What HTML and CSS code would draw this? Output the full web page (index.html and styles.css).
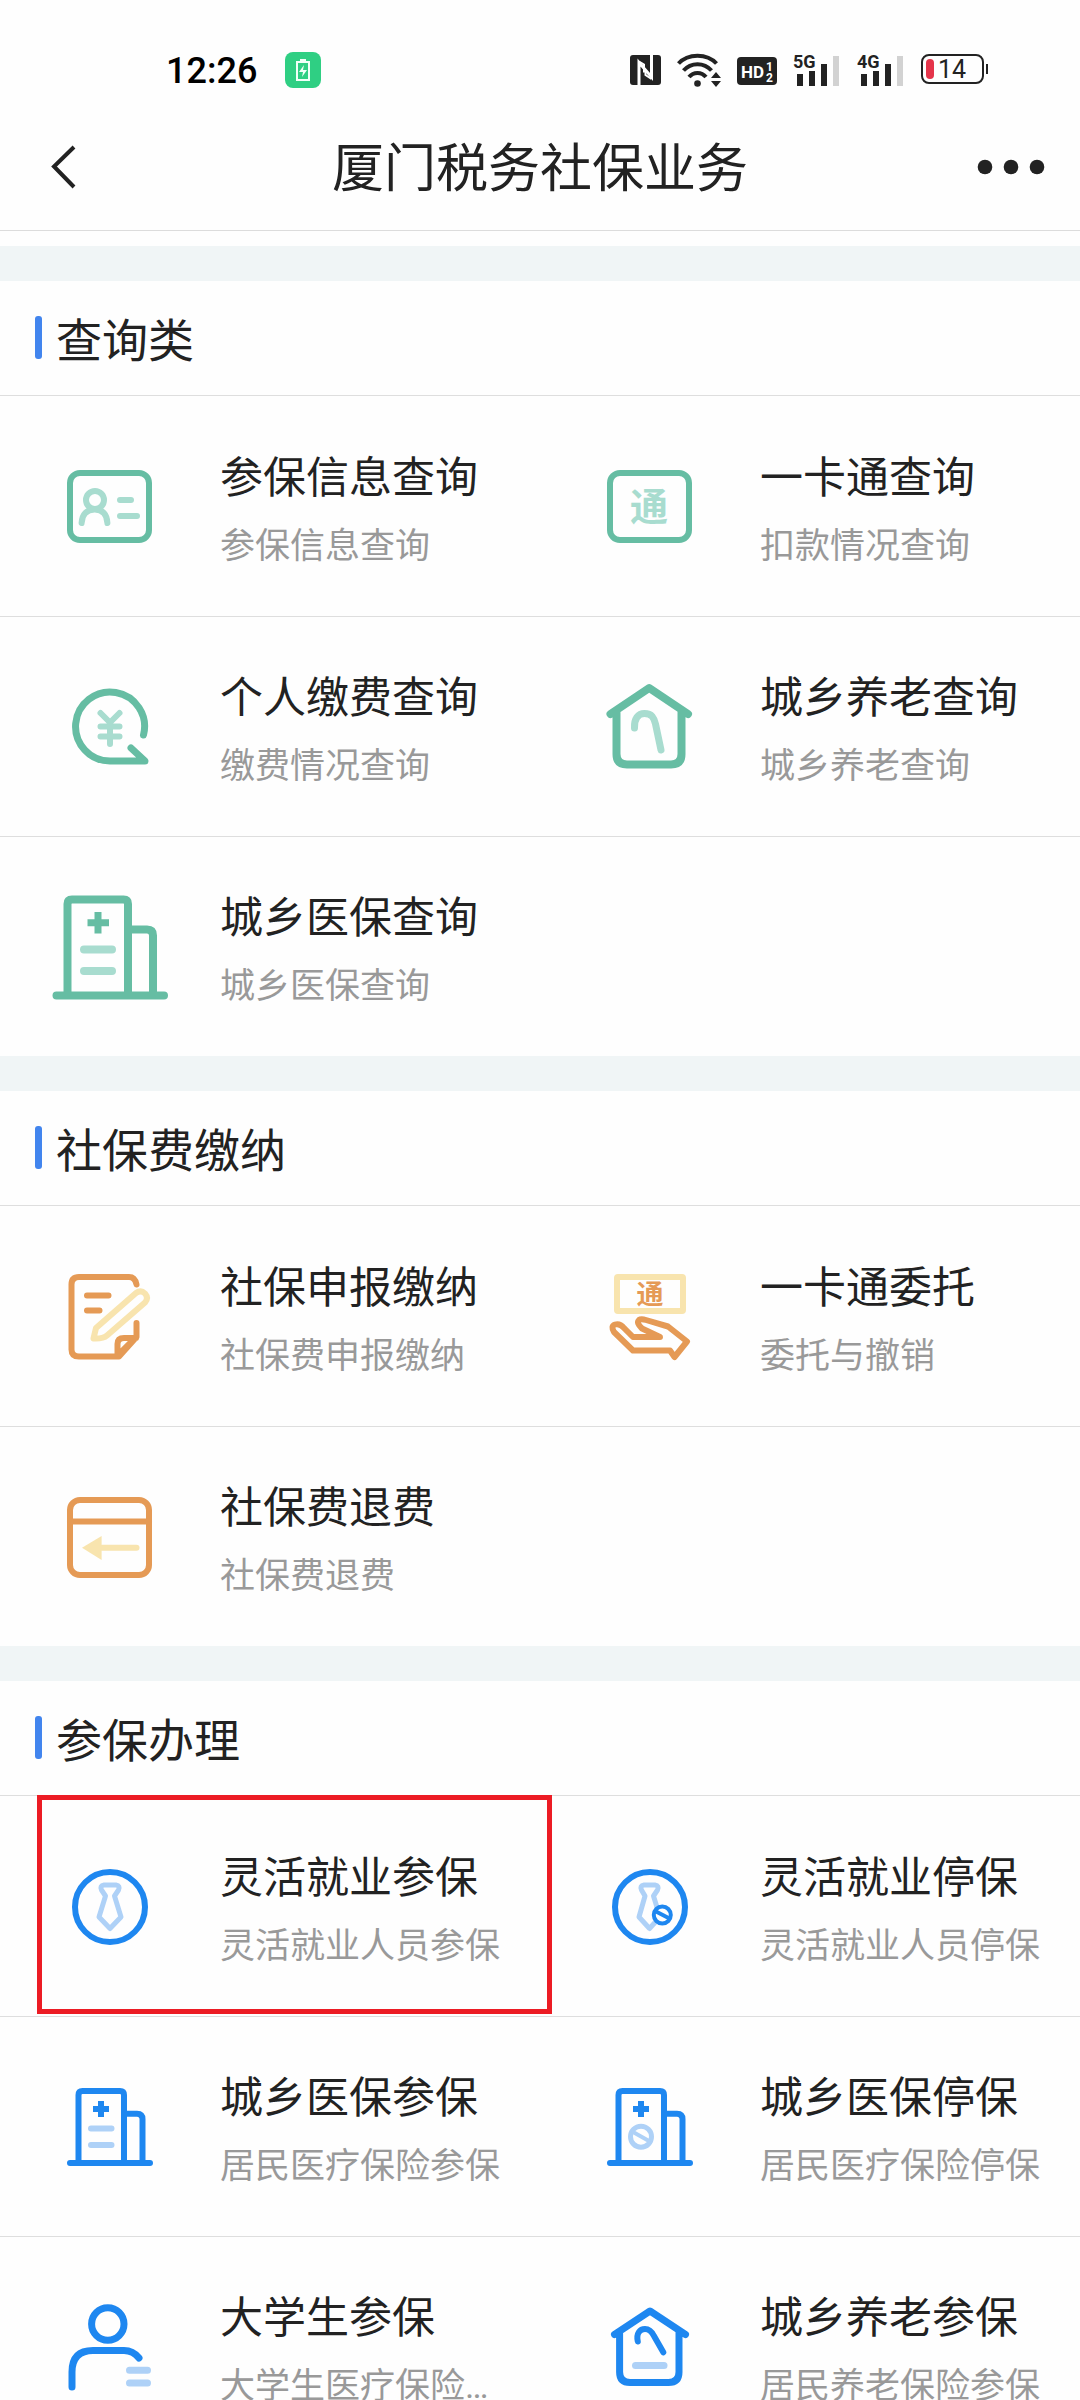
FILE: index.html
```html
<!DOCTYPE html>
<html lang="zh-CN">
<head>
<meta charset="utf-8">
<meta name="viewport" content="width=device-width, initial-scale=1">
<title>厦门税务社保业务</title>
<link rel="stylesheet" href="styles.css">
</head>
<body>
<div class="app">
  <div class="status">
    <div class="status-left">
      <span class="clock">12:26</span>
      <svg class="charge" width="36" height="36" viewBox="0 0 36 36" aria-hidden="true">
        <rect width="36" height="36" rx="8" fill="#2fcf83"/>
        <rect x="12" y="10" width="12" height="18" fill="none" stroke="#f1fff8" stroke-width="2"/>
        <path d="M15 7h6v3h-6z" fill="#f1fff8"/>
        <path d="M19 13l-5 7h4l-1 5 5-7h-4z" fill="#f1fff8"/>
      </svg>
    </div>
    <div class="status-right">
      <svg width="31" height="32" viewBox="0 0 31 32" aria-hidden="true">
        <rect y="1" width="31" height="30" rx="3" fill="#222"/>
        <path d="M9 31V8.500l12.500 14.500V1" fill="none" stroke="#fff" stroke-width="3"/>
        <path d="M9 7.500l5 3v8" fill="none" stroke="#fff" stroke-width="2"/>
        <path d="M21.500 25l-6-4v-4" fill="none" stroke="#fff" stroke-width="2"/>
      </svg>
      <svg width="44" height="34" viewBox="0 0 44 34" aria-hidden="true">
        <g fill="none" stroke="#222" stroke-width="4">
          <path d="M1.500 10.500C11 0 30 0 39.500 10.500"/>
          <path d="M6.500 17.500C14 9 27 9 34.500 17.500"/>
          <path d="M12 24C16.500 18.500 24.500 18.500 29 24"/>
        </g>
        <circle cx="20.500" cy="30.500" r="3.300" fill="#222"/>
        <path d="M39 19l5 6H34zM39 34l5-6H34z" fill="#222"/>
      </svg>
      <svg width="40" height="32" viewBox="0 0 40 32" aria-hidden="true">
        <rect y="3" width="40" height="28" rx="4" fill="#222"/>
        <text x="4" y="24" class="t-hd">HD</text>
        <text x="29" y="17" class="t-num">1</text>
        <text x="29" y="28" class="t-num">2</text>
      </svg>
      <svg width="48" height="42" viewBox="0 -4 48 42" aria-hidden="true">
        <text x="0" y="15" class="t-net">5G</text>
        <path d="M7 21v12M19 18v15M31 11v22" stroke="#222" stroke-width="6"/>
        <path d="M43 3v30" stroke="#d2d2d2" stroke-width="6"/>
      </svg>
      <svg width="48" height="42" viewBox="0 -4 48 42" aria-hidden="true">
        <text x="0" y="15" class="t-net">4G</text>
        <path d="M7 21v12M19 18v15M31 11v22" stroke="#222" stroke-width="6"/>
        <path d="M43 3v30" stroke="#d2d2d2" stroke-width="6"/>
      </svg>
      <svg width="67" height="32" viewBox="0 0 67 32" aria-hidden="true">
        <rect x="1" y="1" width="61" height="28" rx="7" fill="none" stroke="#222" stroke-width="2"/>
        <rect x="5" y="5" width="8" height="20" rx="4" fill="#e5344a"/>
        <path d="M66 10v10" stroke="#222" stroke-width="2"/>
        <text x="17" y="24" class="t-bat">14</text>
      </svg>
    </div>
  </div>

  <header class="nav">
    <button class="nav-btn" type="button" aria-label="返回">
      <svg width="28" height="46" viewBox="0 0 28 46"><path d="M25 2L5 21.500l20 20.500" fill="none" stroke="#222" stroke-width="4"/></svg>
    </button>
    <h1 class="nav-title">厦门税务社保业务</h1>
    <button class="nav-btn nav-more" type="button" aria-label="更多">
      <svg width="68" height="18" viewBox="0 0 68 18" fill="#222"><circle cx="8" cy="8" r="7.300"/><circle cx="34" cy="8" r="7.300"/><circle cx="60" cy="8" r="7.300"/></svg>
    </button>
  </header>

  <main class="content">
    <section class="group">
      <h2 class="group-title">查询类</h2>
      <div class="row">
        <a class="item" href="#">
          <svg class="icon green" viewBox="0 0 120 120" aria-hidden="true">
            <rect x="20" y="27" width="79" height="67" rx="10"/>
            <g class="soft"><circle cx="45" cy="54" r="9"/><path d="M31.600 77C32 68 37 63.500 44.700 63.500S57 68 57.400 77M70 54h11M70 70h17"/></g>
          </svg>
          <span class="text"><span class="name">参保信息查询</span><span class="desc">参保信息查询</span></span>
        </a>
        <a class="item" href="#">
          <svg class="icon green" viewBox="0 0 120 120" aria-hidden="true">
            <rect x="20" y="27" width="79" height="67" rx="10"/>
            <text x="59" y="74" class="t-card">通</text>
          </svg>
          <span class="text"><span class="name">一卡通查询</span><span class="desc">扣款情况查询</span></span>
        </a>
      </div>
      <div class="row">
        <a class="item" href="#">
          <svg class="icon green" viewBox="0 0 120 120" aria-hidden="true">
            <path class="w7" d="M93.500 69A34.500 34.500 0 1 0 60 95H95L81 82"/>
            <path class="soft" d="M50.500 47l9.500 9.500L69.500 47M60 56.500V78M50.500 60.500h19M50.500 70.500h19"/>
          </svg>
          <span class="text"><span class="name">个人缴费查询</span><span class="desc">缴费情况查询</span></span>
        </a>
        <a class="item" href="#">
          <svg class="icon green" viewBox="0 0 120 120" aria-hidden="true">
            <path class="w8" d="M20.500 48L59.200 22L98 48M26.500 46V88q0 10.500 10.500 10.500H81Q91.500 98.500 91.500 88V46"/>
            <path class="soft w7" d="M44.500 62C44 53 48 47.500 54.500 47.500C62 47.500 64 52 65.500 58L71 84"/>
          </svg>
          <span class="text"><span class="name">城乡养老查询</span><span class="desc">城乡养老查询</span></span>
        </a>
      </div>
      <div class="row">
        <a class="item" href="#">
          <svg class="icon green" viewBox="0 0 120 120" aria-hidden="true">
            <path class="w8" d="M6.500 109.500H114M17.500 109V18q0-4.500 4.500-4.500H73.500q4.500 0 4.500 4.500V109M78 43.500H97q6 0 6 6V109"/>
            <path class="w7 butt" d="M48 26v21.500M37.500 36.700H59"/>
            <path class="soft w8" d="M34 63.500H62M34 85H62"/>
          </svg>
          <span class="text"><span class="name">城乡医保查询</span><span class="desc">城乡医保查询</span></span>
        </a>
      </div>
    </section>

    <section class="group">
      <h2 class="group-title">社保费缴纳</h2>
      <div class="row">
        <a class="item" href="#">
          <svg class="icon orange" viewBox="0 0 120 120" aria-hidden="true">
            <path d="M86.500 28.500Q85 21 79 21H29Q21.500 21 21.500 28.500V93.500Q21.500 100.500 29 100.500H69L86.500 81V67M67.500 99V88Q67.500 82 74 82H86M70 97L84 83M37 39.500H58.500M37 54.500H49.500"/>
            <path class="soft" d="M43.500 82.500L46 72L86 37Q91 33.500 95 37.500Q99 42 95 46.500L57 79.500Q53 83 43.500 82.500Z"/>
          </svg>
          <span class="text"><span class="name">社保申报缴纳</span><span class="desc">社保费申报缴纳</span></span>
        </a>
        <a class="item" href="#">
          <svg class="icon orange" viewBox="0 0 120 120" aria-hidden="true">
            <rect class="soft" x="27" y="21" width="66" height="34" rx="1"/>
            <text x="60" y="48" class="t-bill">通</text>
            <path d="M25 68.500Q30 67 34 72L43 81H70L52 72.500Q46 67 49 64Q51 62.500 56 64L78 70.500L97 85.500L84.500 101L80 94.500H43L24 76Q20.500 70 25 68.500Z"/>
          </svg>
          <span class="text"><span class="name">一卡通委托</span><span class="desc">委托与撤销</span></span>
        </a>
      </div>
      <div class="row">
        <a class="item" href="#">
          <svg class="icon orange" viewBox="0 0 120 120" aria-hidden="true">
            <rect x="20" y="24" width="79" height="75" rx="10"/>
            <path d="M20 45.500H99"/>
            <path class="soft" d="M52 71.700H86.500"/>
            <path d="M32 71.700L51.600 60V84Z" class="soft-fill"/>
          </svg>
          <span class="text"><span class="name">社保费退费</span><span class="desc">社保费退费</span></span>
        </a>
      </div>
    </section>

    <section class="group">
      <h2 class="group-title">参保办理</h2>
      <div class="row">
        <a class="item marked" href="#">
          <svg class="icon blue" viewBox="0 0 120 120" aria-hidden="true">
            <circle cx="60" cy="61" r="35"/>
            <path class="soft w5" d="M54 39H66Q70.500 39.500 68.500 44L64.500 50L71 71L60 82.500L49 71L55.500 50L51.500 44Q49.500 39.500 54 39Z"/>
          </svg>
          <span class="text"><span class="name">灵活就业参保</span><span class="desc">灵活就业人员参保</span></span>
        </a>
        <a class="item" href="#">
          <svg class="icon blue" viewBox="0 0 120 120" aria-hidden="true">
            <circle cx="60" cy="61" r="35"/>
            <path class="soft w5" d="M54 39H65Q69.500 39.500 67.500 44L63.500 50L70 71L59.500 82.500L49 71L55 50L51.500 44Q49.500 39.500 54 39Z"/>
            <circle class="w4 hole" cx="72.300" cy="69" r="8.500"/><path class="w4" d="M66 65.500L78.500 72"/>
          </svg>
          <span class="text"><span class="name">灵活就业停保</span><span class="desc">灵活就业人员停保</span></span>
        </a>
      </div>
      <div class="row">
        <a class="item" href="#">
          <svg class="icon blue" viewBox="0 0 120 120" aria-hidden="true">
            <path d="M20 97H100M28.500 97V29q0-4 4-4H70q4 0 4 4V97M74 47.700H87q5.500 0 5.500 5.500V97"/>
            <path class="butt" d="M51 35v16M43 43h16"/>
            <path class="soft" d="M41 62.500H61.500M41 79H61.500"/>
          </svg>
          <span class="text"><span class="name">城乡医保参保</span><span class="desc">居民医疗保险参保</span></span>
        </a>
        <a class="item" href="#">
          <svg class="icon blue" viewBox="0 0 120 120" aria-hidden="true">
            <path d="M20 97H100M28.500 97V29q0-4 4-4H70q4 0 4 4V97M74 47.700H87q5.500 0 5.500 5.500V97"/>
            <path class="butt" d="M51 35v16M43 43h16"/>
            <circle class="soft w5" cx="51" cy="70.700" r="10.500"/><path class="soft w4" d="M43 66L59 75"/>
          </svg>
          <span class="text"><span class="name">城乡医保停保</span><span class="desc">居民医疗保险停保</span></span>
        </a>
      </div>
      <div class="row">
        <a class="item" href="#">
          <svg class="icon blue" viewBox="0 0 120 120" aria-hidden="true">
            <circle class="w7" cx="57.800" cy="38" r="16.200"/>
            <path class="w7" d="M22 101V86Q22 64.500 43 64.500H74Q83 64.500 89 72"/>
            <path class="soft w7" d="M79.500 84.300H97.500M79.500 97H97.500"/>
          </svg>
          <span class="text"><span class="name">大学生参保</span><span class="desc">大学生医疗保险参保</span></span>
        </a>
        <a class="item" href="#">
          <svg class="icon blue" viewBox="0 0 120 120" aria-hidden="true">
            <path class="w7" d="M24.500 48.500L60 25L95.500 48.500M29.600 46V86q0 10.500 10.500 10.500H78.500Q89 96.500 89 86V46"/>
            <path d="M47.800 55.500C46 47 50 43 55 43C60 43 62 46 64 50L73.300 66.300"/>
            <path class="soft w7" d="M45.500 79.500H74"/>
          </svg>
          <span class="text"><span class="name">城乡养老参保</span><span class="desc">居民养老保险参保</span></span>
        </a>
      </div>
    </section>
  </main>
</div>
</body>
</html>
```
FILE: styles.css
```css
* { box-sizing: border-box; }

body {
  margin: 0;
  background: #fefefe;
  color: #222;
  font-family: Roboto, "Noto Sans CJK SC", sans-serif;
}

svg { display: block; flex: none; }

.app {
  display: flex;
  flex-direction: column;
  height: 100vh;
}

/* Phone status bar */
.status {
  display: flex;
  justify-content: space-between;
  align-items: center;
  height: 106px;
  padding: 33px 92px 0 166px;
  flex: none;
}
.status-left { display: flex; align-items: center; gap: 28px; }
.status-right { display: flex; align-items: center; gap: 16px; }
.clock { padding-top: 2px; font-size: 36px; font-weight: 500; line-height: 40px; color: #000; }
.t-hd { font: 700 17px Roboto, sans-serif; fill: #fff; }
.t-num { font: 700 12px Roboto, sans-serif; fill: #fff; }
.t-net { font: 700 18px Roboto, sans-serif; fill: #222; }
.t-bat { font: 400 25px Roboto, sans-serif; fill: #222; }

/* Title bar */
.nav {
  display: grid;
  grid-template-columns: 1fr auto 1fr;
  align-items: center;
  height: 125px;
  padding: 0 35px 0 49px;
  border-bottom: 1px solid #dcdcdc;
  flex: none;
}
.nav-btn { padding: 0; border: 0; background: none; justify-self: start; }
.nav-more { justify-self: end; }
.nav-title { margin: 0; padding: 3px 14px 0 0; font-size: 52px; font-weight: 400; line-height: 64px; }

/* Scrolling list of services */
.content {
  flex: 1;
  min-height: 0;
  padding-top: 15px;
  overflow-y: auto;
  scrollbar-width: none;
}
.group { border-top: 35px solid #f0f5f6; }
.group-title {
  display: flex;
  align-items: center;
  gap: 14px;
  height: 115px;
  margin: 0;
  padding: 0 0 2px 35px;
  border-bottom: 1px solid #dedede;
  font-size: 46px;
  font-weight: 400;
}
.group-title::before {
  content: "";
  width: 7px;
  height: 43px;
  border-radius: 3px;
  background: #4285ee;
}
.row {
  display: grid;
  grid-template-columns: 1fr 1fr;
  height: 220px;
}
.row + .row { box-shadow: inset 0 1px #dedede; }

.item {
  position: relative;
  display: flex;
  align-items: center;
  gap: 50px;
  min-width: 0;
  padding: 0 20px 0 50px;
  color: inherit;
  text-decoration: none;
}
.text { display: flex; flex-direction: column; gap: 13px; min-width: 0; flex: 1; padding-top: 9px; }
.name { font-size: 43px; line-height: 60px; white-space: nowrap; }
.desc {
  overflow: hidden;
  font-size: 35px;
  line-height: 52px;
  color: #999;
  white-space: nowrap;
  text-overflow: ellipsis;
}

.marked::after {
  content: "";
  position: absolute;
  inset: -1px -12px 2px 37px;
  z-index: 1;
  border: 5px solid #ec1c24;
  pointer-events: none;
}

/* Line icons: one main tone and one soft tone per group */
.icon {
  width: 120px;
  height: 120px;
  fill: none;
  stroke: var(--main);
  stroke-width: 6px;
  stroke-linecap: round;
  stroke-linejoin: round;
}
.green { --main: #66bda3; --soft: #a8dccf; }
.orange { --main: #e59a55; --soft: #f8e4ae; }
.blue { --main: #1e87f0; --soft: #aed1f7; }
.soft { stroke: var(--soft); }
.soft-fill { fill: var(--soft); stroke: none; }
.hole { fill: #fefefe; }
.butt { stroke-linecap: butt; }
.w4 { stroke-width: 4px; }
.w5 { stroke-width: 5px; }
.w7 { stroke-width: 7px; }
.w8 { stroke-width: 8px; }
.t-card, .t-bill {
  stroke: none;
  text-anchor: middle;
  font-family: "Noto Sans CJK SC", sans-serif;
  font-weight: 700;
}
.t-card { font-size: 38px; fill: var(--soft); }
.t-bill { font-size: 27px; fill: var(--main); }
```
